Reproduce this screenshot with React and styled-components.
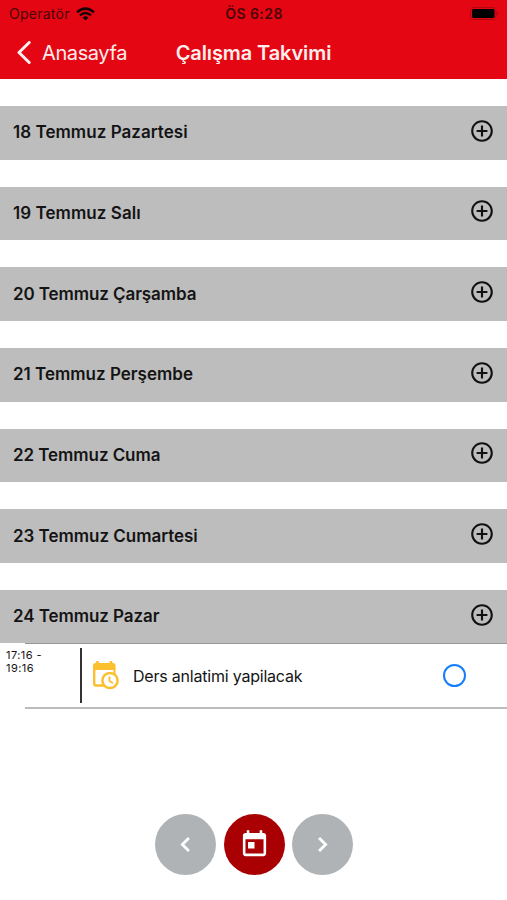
import React from 'react';
import styled, { createGlobalStyle } from 'styled-components';

const GlobalStyle = createGlobalStyle`
  * { box-sizing: border-box; }
  html, body { margin: 0; padding: 0; background: #fff; overflow: hidden; }
  body { font-family: Inter, "Liberation Sans", sans-serif; color: #141414; }
  svg { display: block; flex: none; }
  button { border: 0; padding: 0; font: inherit; color: inherit; background: none; }
`;

const Screen = styled.div`
  width: 507px;
  height: 900px;
  display: flex;
  flex-direction: column;
  background: #fff;
`;

const Header = styled.header`
  height: 79px;
  flex: none;
  background: #e40613;
`;

const StatusBar = styled.div`
  height: 27px;
  padding: 0 8px 0 9px;
  display: grid;
  grid-template-columns: 1fr auto 1fr;
  align-items: center;
  color: #4b0508;
  font-size: 14px;
  line-height: 27px;
`;

const Carrier = styled.div`
  display: flex;
  align-items: center;
  gap: 6px;
  letter-spacing: 0.25px;
`;

const Clock = styled.div`
  font-weight: 600;
  letter-spacing: 0.45px;
`;

const BatterySlot = styled.div`
  justify-self: end;
`;

const NavBar = styled.nav`
  height: 52px;
  padding: 0 17px;
  display: grid;
  grid-template-columns: 1fr auto 1fr;
  align-items: center;
  color: #ffeeed;
  font-size: 20px;
  line-height: 52px;
`;

const BackButton = styled.button`
  display: flex;
  align-items: center;
  gap: 10px;
  height: 52px;
  letter-spacing: -0.4px;
`;

const Title = styled.h1`
  margin: 0;
  font-size: 20px;
  font-weight: 600;
  letter-spacing: -0.1px;
`;

const DayList = styled.main`
  display: flex;
  flex-direction: column;
  gap: 27px;
  padding-top: 27px;
`;

const DayRow = styled.div`
  height: 53.65px;
  flex: none;
  padding: 0 12px 0 13px;
  display: flex;
  align-items: center;
  justify-content: space-between;
  background: #bdbdbd;
`;

const DayLabel = styled.span`
  margin-top: -1px;
  font-size: 17px;
  font-weight: 600;
  letter-spacing: ${(p) => p.$tracking}px;
  line-height: 24px;
`;

const AddButton = styled.button`
  margin-top: -4px;
`;

const Entry = styled.section`
  height: 66px;
  flex: none;
  display: flex;
  background: linear-gradient(#979797, #979797) 25px 0 / 482px 1px no-repeat,
    linear-gradient(#bcbcbc, #bcbcbc) 25px 64px / 482px 2px no-repeat;
`;

const TimeRange = styled.div`
  width: 80px;
  padding: 6px 0 0 6px;
  font-size: 11px;
  line-height: 13px;
  letter-spacing: 0.45px;
`;

const EntryBody = styled.div`
  height: 55px;
  margin-top: 5px;
  flex: 1;
  display: flex;
  align-items: center;
  padding: 0 41px 0 10px;
  border-left: 2px solid #333;
`;

const EntryText = styled.span`
  margin-left: 13px;
  flex: 1;
  font-size: 16px;
  line-height: 24px;
  letter-spacing: -0.21px;
`;

const StatusCircle = styled.button`
  width: 23px;
  height: 23px;
  border: 2.5px solid #167dfa;
  border-radius: 50%;
`;

const WeekControls = styled.footer`
  margin-top: auto;
  padding: 0 0 25px 1px;
  display: flex;
  justify-content: center;
  gap: 7.5px;
`;

const RoundButton = styled.button`
  width: 61px;
  height: 61px;
  border-radius: 50%;
  display: flex;
  align-items: center;
  justify-content: center;
  background: ${(p) => (p.$active ? '#a90003' : '#b0b3b5')};
`;

const WifiIcon = () => (
  <svg width="19" height="14" viewBox="0 0 19 14" fill="none" stroke="#190203" strokeWidth="2.5">
    <path d="M1 5.2Q9.5-2 18 5.2" />
    <path d="M4 8.4Q9.5 3.6 15 8.4" />
    <path d="M9.5 13.4 6.5 10.4Q9.5 8 12.5 10.4Z" fill="#190203" stroke="none" />
  </svg>
);

const BatteryIcon = () => (
  <svg width="29" height="13" viewBox="0 0 29 13">
    <rect x=".5" y=".5" width="25.5" height="12" rx="3" fill="none" stroke="#b30710" />
    <rect x="2" y="2" width="22.5" height="9" rx="1.5" fill="#000" />
    <path d="M27.3 4.5q1.4 2 0 4z" fill="#8c070d" />
  </svg>
);

const BackIcon = () => (
  <svg width="15" height="24" viewBox="0 0 15 24" fill="none" stroke="#ffeeed" strokeWidth="3" strokeLinecap="round" strokeLinejoin="round">
    <path d="M12.2 1.5 2 11.5l10.2 10" />
  </svg>
);

const AddIcon = () => (
  <svg width="26" height="26" viewBox="0 0 24 24" fill="#111">
    <path d="M13 7h-2v4H7v2h4v4h2v-4h4v-2h-4V7zm-1-5C6.48 2 2 6.48 2 12s4.48 10 10 10 10-4.48 10-10S17.52 2 12 2zm0 18c-4.41 0-8-3.59-8-8s3.59-8 8-8 8 3.59 8 8-3.59 8-8 8z" />
  </svg>
);

const CalendarClockIcon = () => (
  <svg width="28" height="30" viewBox="0 0 28 30" fill="none" stroke="#fcbf2d">
    <path d="M5.5 0v5M19 0v5" strokeWidth="2.6" />
    <path d="M1 9V4.5Q1 2 3.5 2H21Q23.5 2 23.5 4.5V9Z" fill="#fcbf2d" stroke="none" />
    <path d="M2.2 8v14.5Q2.2 24.5 4.2 24.5H13" strokeWidth="2.4" />
    <path d="M22.5 8v7" strokeWidth="2" />
    <circle cx="18" cy="19.5" r="7.6" fill="#fff" strokeWidth="2.5" />
    <path d="M17.5 15.5V20l3.5 2.2" strokeWidth="1.8" />
  </svg>
);

const ChevronIcon = ({ next }) => (
  <svg width="29" height="29" viewBox="0 0 24 24" fill="#fff" stroke="#fff" strokeWidth=".4">
    <path d={next ? 'M10 6 8.59 7.41 13.17 12l-4.58 4.59L10 18l6-6z' : 'M15.41 7.41 14 6l-6 6 6 6 1.41-1.41L10.83 12z'} />
  </svg>
);

const TodayIcon = () => (
  <svg width="31" height="31" viewBox="0 0 24 24" fill="#fff">
    <path d="M19 3h-1V1h-2v2H8V1H6v2H5c-1.11 0-1.99.9-1.99 2L3 19c0 1.1.89 2 2 2h14c1.1 0 2-.9 2-2V5c0-1.1-.9-2-2-2zm0 16H5V8h14v11zM7 10h5v5H7z" />
  </svg>
);

const days = [
  { label: '18 Temmuz Pazartesi', tracking: 0.04 },
  { label: '19 Temmuz Salı', tracking: 0.06 },
  { label: '20 Temmuz Çarşamba', tracking: -0.09 },
  { label: '21 Temmuz Perşembe', tracking: 0 },
  { label: '22 Temmuz Cuma', tracking: -0.07 },
  { label: '23 Temmuz Cumartesi', tracking: -0.03 },
  { label: '24 Temmuz Pazar', tracking: -0.07 },
];

export default function App() {
  return (
    <Screen>
      <GlobalStyle />
      <Header>
        <StatusBar>
          <Carrier>Operatör<WifiIcon /></Carrier>
          <Clock>ÖS 6:28</Clock>
          <BatterySlot><BatteryIcon /></BatterySlot>
        </StatusBar>
        <NavBar>
          <BackButton><BackIcon />Anasayfa</BackButton>
          <Title>Çalışma Takvimi</Title>
        </NavBar>
      </Header>
      <DayList>
        {days.map((day) => (
          <DayRow key={day.label}>
            <DayLabel $tracking={day.tracking}>{day.label}</DayLabel>
            <AddButton aria-label="Ekle"><AddIcon /></AddButton>
          </DayRow>
        ))}
      </DayList>
      <Entry>
        <TimeRange>17:16 -<br />19:16</TimeRange>
        <EntryBody>
          <CalendarClockIcon />
          <EntryText>Ders anlatimi yapilacak</EntryText>
          <StatusCircle aria-label="Tamamla" />
        </EntryBody>
      </Entry>
      <WeekControls>
        <RoundButton aria-label="Önceki hafta"><ChevronIcon /></RoundButton>
        <RoundButton $active aria-label="Bugün"><TodayIcon /></RoundButton>
        <RoundButton aria-label="Sonraki hafta"><ChevronIcon next /></RoundButton>
      </WeekControls>
    </Screen>
  );
}
